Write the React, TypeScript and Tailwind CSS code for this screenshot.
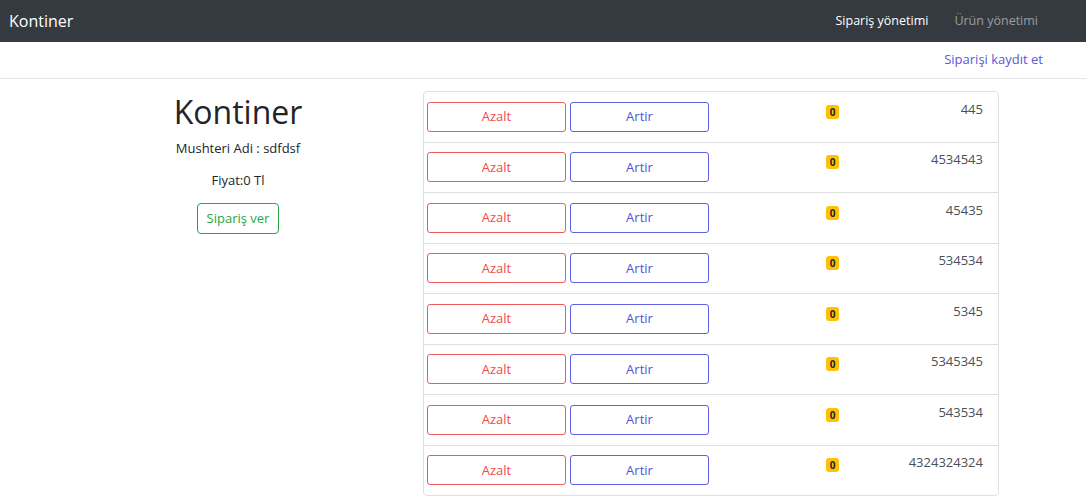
import React from 'react';

const items = ['445', '4534543', '45435', '534534', '5345', '5345345', '543534', '4324324324'];

export default function App() {
  return (
    <div className="min-h-screen bg-white text-[#212529]" style={{ fontFamily: '"Open Sans", "Liberation Sans", sans-serif' }}>
      <nav className="h-[42px] bg-[#343a40] flex items-center px-[9px]">
        <span className="text-white text-[16px]">Kontiner</span>
        <div className="ml-auto flex items-center text-[12.5px] mr-[39px]">
          <span className="text-white">Sipariş yönetimi</span>
          <span className="ml-[26px] text-white/50">Ürün yönetimi</span>
        </div>
      </nav>
      <div className="h-[37px] border-b border-[#e5e5e5] flex items-center justify-end pr-[43px]">
        <span className="text-[13px] text-[#5a57d8]">Siparişi kaydıt et</span>
      </div>
      <div className="flex pl-[78px] pt-[12px]">
        <div className="w-[320px] flex flex-col items-center">
          <h1 className="text-[32px] leading-[43px] mt-[-1px]">Kontiner</h1>
          <p className="text-[13px] mt-[6px]">Mushteri Adi : sdfdsf</p>
          <p className="text-[13px] mt-[12px]">Fiyat:0 Tl</p>
          <button className="mt-[13px] border border-[#28a745] text-[#28a745] rounded-[4px] h-[31px] px-[9px] text-[13px]">
            Sipariş ver
          </button>
        </div>
        <div className="ml-[25px] w-[576px] border border-[#dfdfdf] rounded-[4px]">
          {items.map((n, i) => (
            <div key={i} className={`flex items-start pl-[3px] pr-[15px] py-[9.75px] ${i > 0 ? 'border-t border-[#dfdfdf]' : ''}`}>
              <button className="w-[139px] h-[30px] border border-[#f05a5a] text-[#f04a4a] rounded-[3px] text-[13px]">Azalt</button>
              <button className="ml-[4px] w-[139px] h-[30px] border border-[#5f5fe6] text-[#5252d8] rounded-[3px] text-[13px]">Artir</button>
              <span className="ml-[117px] mt-[3px] w-[13px] h-[14px] bg-[#ffc107] rounded-[3px] text-[10px] font-bold leading-[14px] text-center text-[#212529]">0</span>
              <span className="flex-1 text-right text-[13px] text-[#495057] leading-[21px] -mt-[3px]">{n}</span>
            </div>
          ))}
        </div>
      </div>
    </div>
  );
}
